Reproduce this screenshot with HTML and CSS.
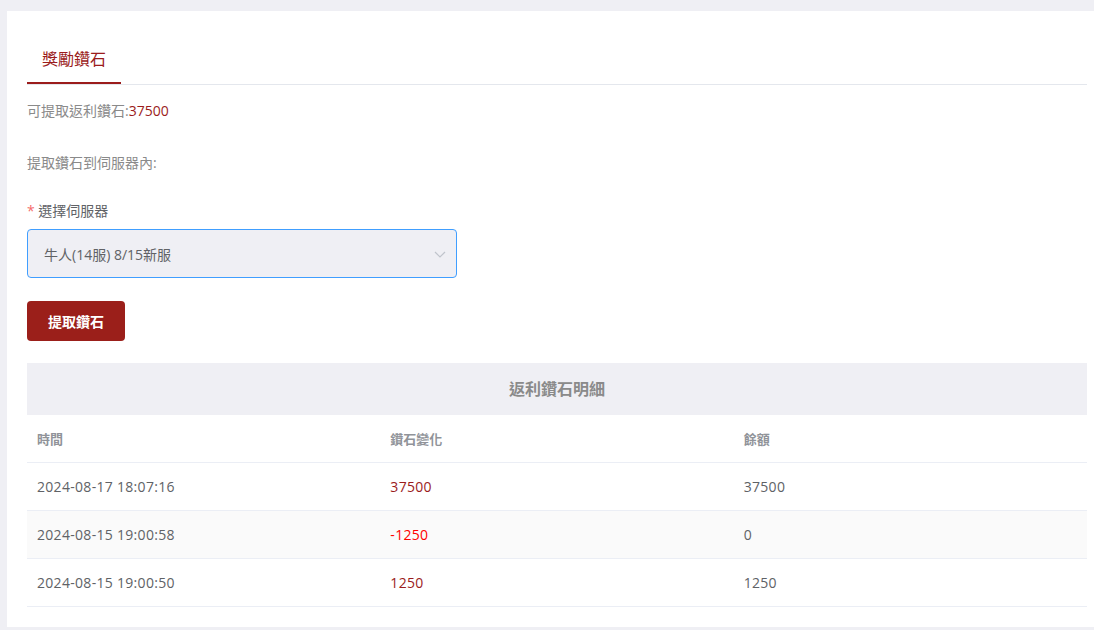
FILE: index.html
```html
<!doctype html>
<html lang="zh-Hant">

<head>
	<meta charset="UTF-8" />
	<meta name="viewport" content="width=device-width, initial-scale=1.0" />
	<title>獎勵鑽石</title>
	<link rel="stylesheet" href="styles.css">
</head>

<body>
	<div class="card">
		<div class="tabs">
			<div class="tab active">獎勵鑽石</div>
		</div>

		<p class="balance">可提取返利鑽石:<span class="num">37500</span></p>
		<p class="hint">提取鑽石到伺服器內:</p>

		<div class="form-item">
			<label class="form-label"><span class="required">*</span> 選擇伺服器</label>
			<div class="select">
				<span>牛人(14服) 8/15新服</span>
				<svg class="arrow" width="12" height="12" viewBox="0 0 12 12">
					<path d="M1 4l5 5 5-5" fill="none" stroke="#c0c4cc" stroke-width="1.2" />
				</svg>
			</div>
		</div>

		<button class="btn-primary">提取鑽石</button>

		<div class="record">
			<div class="record-title">返利鑽石明細</div>
			<table class="record-table">
				<thead>
					<tr>
						<th>時間</th>
						<th>鑽石變化</th>
						<th>餘額</th>
					</tr>
				</thead>
				<tbody>
					<tr>
						<td>2024-08-17 18:07:16</td>
						<td class="plus">37500</td>
						<td>37500</td>
					</tr>
					<tr>
						<td>2024-08-15 19:00:58</td>
						<td class="minus">-1250</td>
						<td>0</td>
					</tr>
					<tr>
						<td>2024-08-15 19:00:50</td>
						<td class="plus">1250</td>
						<td>1250</td>
					</tr>
				</tbody>
			</table>
		</div>
	</div>
</body>

</html>
```

FILE: styles.css
```css
* {
	margin: 0;
	padding: 0;
	box-sizing: border-box;
}

html,
body {
	height: 100%;
	overflow: hidden;
}

body {
	font-family: "Open Sans", "Noto Sans CJK TC", sans-serif;
	font-size: 14px;
	color: #606266;
	background-color: #efeff4;
	padding: 11px 0 0 7px;
}

.card {
	width: 1100px;
	height: 616px;
	background-color: white;
	padding: 28px 20px 0;
}

.tabs {
	display: flex;
	border-bottom: 1px solid #e4e7ed;
}

.tab {
	height: 45px;
	line-height: 40px;
	padding: 0 15px;
	font-size: 16px;
	color: #9b1c1c;
	border-bottom: 2px solid transparent;
}

.tab.active {
	border-bottom-color: #9b1c1c;
}

.balance {
	margin-top: 15px;
	line-height: 22px;
	color: #8a8a8a;
}

.num {
	color: #9b1c1c;
}

.hint {
	margin-top: 30px;
	line-height: 22px;
	color: #8a8a8a;
}

.form-item {
	margin-top: 26px;
}

.form-label {
	display: block;
	line-height: 22px;
	color: #606266;
}

.required {
	color: #f56c6c;
}

.select {
	margin-top: 7px;
	width: 430px;
	height: 49px;
	border: 1px solid #409eff;
	border-radius: 4px;
	background-color: #efeff4;
	display: flex;
	align-items: center;
	justify-content: space-between;
	padding: 0 10px 0 16px;
}

.arrow {
	display: block;
}

.btn-primary {
	display: block;
	margin-top: 23px;
	width: 98px;
	height: 40px;
	border: none;
	border-radius: 4px;
	background-color: #9b1f1a;
	color: white;
	font-family: inherit;
	font-size: 14px;
	font-weight: bold;
	cursor: pointer;
}

.record {
	margin-top: 22px;
}

.record-title {
	height: 52px;
	line-height: 52px;
	text-align: center;
	background-color: #efeff4;
	font-size: 16px;
	font-weight: bold;
	color: #8a8a8a;
}

.record-table {
	width: 100%;
	border-collapse: collapse;
	table-layout: fixed;
}

.record-table th,
.record-table td {
	text-align: left;
	padding: 0 10px;
	border-bottom: 1px solid #ebeef5;
}

.record-table th {
	height: 47px;
	font-size: 13px;
	font-weight: bold;
	color: #909399;
}

.record-table td {
	height: 48px;
	color: #606266;
	letter-spacing: 0.3px;
}

.record-table tbody tr:nth-child(2) td {
	background-color: #fafafa;
}

.record-table td.plus {
	color: #9b1c1c;
}

.record-table td.minus {
	color: #ff0000;
}
```
